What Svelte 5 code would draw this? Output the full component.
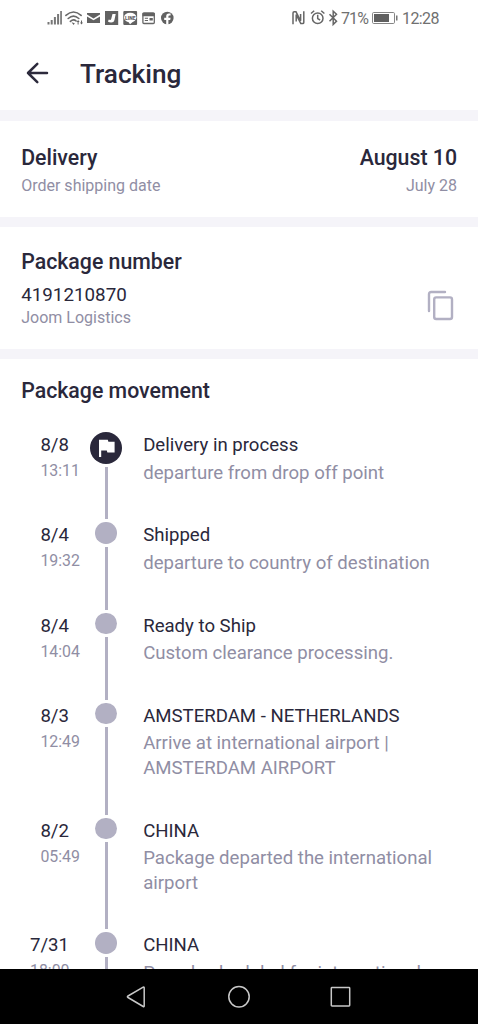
<script>
  const events = [
    { date: '8/8', time: '13:11', title: 'Delivery in process', lines: ['departure from drop off point'], current: true },
    { date: '8/4', time: '19:32', title: 'Shipped', lines: ['departure to country of destination'] },
    { date: '8/4', time: '14:04', title: 'Ready to Ship', lines: ['Custom clearance processing.'] },
    { date: '8/3', time: '12:49', title: 'AMSTERDAM - NETHERLANDS', lines: ['Arrive at international airport |', 'AMSTERDAM AIRPORT'] },
    { date: '8/2', time: '05:49', title: 'CHINA', lines: ['Package departed the international', 'airport'] },
    { date: '7/31', time: '18:00', title: 'CHINA', lines: ['Parcel scheduled for international'] }
  ];
</script>

<div class="screen">
  <div class="status">
    <svg class="left-icons" width="130" height="20" viewBox="0 0 130 20" fill="#626262">
      <path d="M.5 14h2v2.600h-2zM3.700 12h2v4.600h-2zM6.900 9h2v7.600h-2zM10.100 6h2v10.600h-2zM13.200 3h1.700v13.600h-1.700z" fill="#777" />
      <g fill="none" stroke="#686868" stroke-width="1.6" stroke-linecap="round">
        <path d="M18.900 7.400Q26.500.6 34.100 7.400M21.200 10.500Q26.500 5.900 31.800 10.500M23.400 13.400Q26.500 10.500 29.100 13" />
      </g>
      <path d="m24.500 14.200 2.100 2.700 1.200-1.600zM29.600 14l1.500-1.900 1.500 1.900h-1v2.600h-1V14zM33 14.600h1v-2h1v2h1l-1.500 2z" />
      <path d="M40 5h13v1.600l-6.500 3.800L40 6.600zm0 3.400 6.500 3.800L53 8.400V15H40z" />
      <path d="M58 3h13.200v14H58z" /><path d="M65.500 6h3.200l-1.300 6.300q-.4 2.300-3.200 2.300-2 0-3.300-1l.9-2q2 1 2.400-.7z" fill="#fff" />
      <rect x="76.300" y="3" width="13.800" height="14" rx="1" />
      <ellipse cx="83.200" cy="9.500" rx="6.200" ry="4.800" fill="#fff" /><path d="m81 13.200 2 3 3.500-3z" fill="#fff" />
      <text x="83.200" y="11.500" text-anchor="middle" font-size="5" font-weight="900" textLength="10.500" lengthAdjust="spacingAndGlyphs">LINE</text>
      <rect x="95.900" y="5" width="11.400" height="10.500" rx="1" fill="none" stroke="#666" stroke-width="1.300" />
      <path d="M95.500 5h12.300v3.300H95.500zM102.500 10h3.300v2.500h-3.300zM97.800 9.800h3.200v1h-3.200zM97.800 12h3.200v1h-3.200z" />
      <circle cx="120.300" cy="10" r="6.300" /><path d="M119.200 16.700v-4.800h-2V9.800h2V8.300q0-2.700 2.700-2.700h1.700v2h-1.200q-1 0-1 1v1.200h2.200l-.4 2.100h-1.800v4.800z" fill="#fff" />
    </svg>
    <div class="right">
      <svg width="50" height="20" viewBox="0 0 50 20" fill="none" stroke="#666">
        <path d="M2 16.200V5Q2 3.800 3.200 3.800H5L9.600 12.800V6" stroke-width="1.500" />
        <path d="M12.800 3.200v11.200q0 1.200-1.200 1.200H9.800L5.200 6.600v6.800" stroke-width="1.500" />
        <circle cx="26.700" cy="10.300" r="5.300" stroke-width="1.500" /><path d="M26.700 6.800v3.800l2.400 1.400M20 5.500l3.200-2.700M33.400 5.500l-3.200-2.700" stroke-width="1.500" />
        <path d="m38.500 6.300 7 7-3.300 3.100V3.200l3.300 3.100-7 7" stroke-width="1.500" />
      </svg>
      <span class="pct">71%</span>
      <svg class="battery" width="27" height="14" viewBox="0 0 27 14">
        <rect x=".5" y="1.500" width="22" height="11" rx="1.200" fill="none" stroke="#858585" />
        <path d="M2 3h15v8H2z" fill="#606060" /><path d="M24 4.500h1.500v5H24z" fill="#777" />
      </svg>
      <span class="clock">12:28</span>
    </div>
  </div>

  <header>
    <svg width="24" height="24" viewBox="0 0 24 24" fill="none" stroke="#2c2a3c" stroke-width="2.500" stroke-linecap="round" stroke-linejoin="round">
      <path d="M22 12H3M12.300 2.800 3 12l9.300 9.200" />
    </svg>
    <h1>Tracking</h1>
  </header>

  <section class="delivery">
    <div class="pair"><h2>Delivery</h2><h2 class="august">August 10</h2></div>
    <div class="pair small"><span class="ship">Order shipping date</span><span>July 28</span></div>
  </section>

  <section class="package">
    <h2 class="pn">Package number</h2>
    <div class="number">4191210870</div>
    <div class="small carrier">Joom Logistics</div>
    <svg class="copy" width="28" height="32" viewBox="0 0 28 32" fill="none" stroke="#b2b0c3" stroke-width="2.400" stroke-linecap="round">
      <path d="M2 21V4.200Q2 2 4.200 2H18" /><rect x="7.200" y="7.400" width="17.800" height="21.600" rx="2" />
    </svg>
  </section>

  <section class="movement">
    <h2 class="pm">Package movement</h2>
    {#each events as e}
      <div class="event">
        <div class="when"><div class="stamp"><div class="date">{e.date}</div><div class="time">{e.time}</div></div></div>
        <div class="track">
          {#if e.current}
            <svg width="32" height="32" viewBox="0 0 32 32"><circle cx="16" cy="16" r="16" fill="#2a283b" /><path d="M9 7.800h8.800l.6 2h6.200v10.800h-7.200l-.6-2.100h-5.600V25H9z" fill="#fff" /></svg>
          {:else}
            <span class="dot"></span>
          {/if}
          <span class="line"></span>
        </div>
        <div class="what">
          <div class="title">{e.title}</div>
          {#each e.lines as l}<div class="desc">{l}</div>{/each}
        </div>
      </div>
    {/each}
  </section>

  <nav>
    <svg width="24" height="26" viewBox="0 0 24 26"><path d="M3 12 18.200 3.200q1-.5 1 .6v18.100q0 1.200-1 .6L3 13.500q-1.200-.75 0-1.500z" /></svg>
    <svg width="24" height="26" viewBox="0 0 24 26"><circle cx="12" cy="12.700" r="10.200" /></svg>
    <svg width="24" height="26" viewBox="0 0 24 26"><rect x="2.300" y="3.500" width="18.400" height="18.400" rx=".7" /></svg>
  </nav>
</div>

<style>
  :global(body) { margin: 0; overflow: hidden; }
  .screen { height: 1024px; width: 478px; display: flex; flex-direction: column; overflow: hidden; background: #fff; font-family: Roboto, sans-serif; color: #2a283b; white-space: nowrap; }
  svg { display: block; flex: none; }
  h1, h2 { margin: 0; font-weight: 500; }
  .status { height: 36px; flex: none; display: flex; justify-content: space-between; align-items: center; padding: 0 39px 0 47px; box-sizing: border-box; color: #707070; }
  .right { display: flex; align-items: center; }
  .pct, .clock { font-size: 16px; line-height: 20px; padding-top: 1px; }
  .pct { letter-spacing: -.9px; width: 31px; }
  .clock { width: 37px; letter-spacing: -.6px; }
  .battery { margin-right: 3px; }
  header { height: 74px; flex: none; display: flex; align-items: center; gap: 31px; padding-left: 25px; box-sizing: border-box; }
  h1 { font-size: 26.200px; line-height: 34px; padding-top: 2px; }
  section { border-top: 11px solid #f5f4f9; box-sizing: border-box; flex: none; }
  h2 { font-size: 21.300px; line-height: 26px; }
  .small { font-size: 16px; line-height: 20px; color: #908ea4; }
  .delivery { height: 107px; padding: 24px 21px 0 21.200px; }
  .pair { display: flex; justify-content: space-between; }
  .pair.small { padding-top: 5px; }
  .package { height: 132px; border-top-width: 10px; display: grid; grid-template-columns: 1fr auto; grid-template-rows: 26px 24px 20px; padding: 22px 23px 0 21.200px; align-content: start; }
  .package > * { grid-column: 1; }
  .number { font-size: 18.800px; line-height: 24px; padding-top: 8px; }
  .package .carrier { padding-top: 9px; }
  .package .copy { grid-column: 2; grid-row: 2 / 4; align-self: start; margin-top: 15px; }
  .movement { flex: 1 1 0; min-height: 0; overflow: hidden; border-top-width: 10px; padding: 19px 21.500px 0 21.200px; }
  .pm { margin-bottom: 28px; }
  .event { display: grid; grid-template-columns: 47.800px 74.200px 1fr; }
  .when { display: flex; justify-content: flex-end; }
  .stamp { display: flex; flex-direction: column; }
  .date, .title { font-size: 18.600px; line-height: 25px; padding-top: 1px; }
  .time { width: 0; font-size: 15.900px; line-height: 20px; padding-top: 3px; color: #908ea4; }
  .track { display: flex; flex-direction: column; align-items: center; gap: 3px; padding-bottom: 3px; }
  .dot { width: 21.400px; height: 21.400px; border-radius: 50%; background: #b2b0c3; }
  .line { width: 3px; flex: 1; background: #b2b0c3; }
  .what { padding-bottom: 37.300px; }
  .title { margin-bottom: 2.600px; }
  .desc { font-size: 18.600px; line-height: 24.400px; color: #908ea4; }
  nav { height: 55px; flex: none; background: #000; display: flex; justify-content: center; align-items: center; gap: 78px; }
  nav svg { fill: none; stroke: #c8c8c8; stroke-width: 1.500; }
</style>
